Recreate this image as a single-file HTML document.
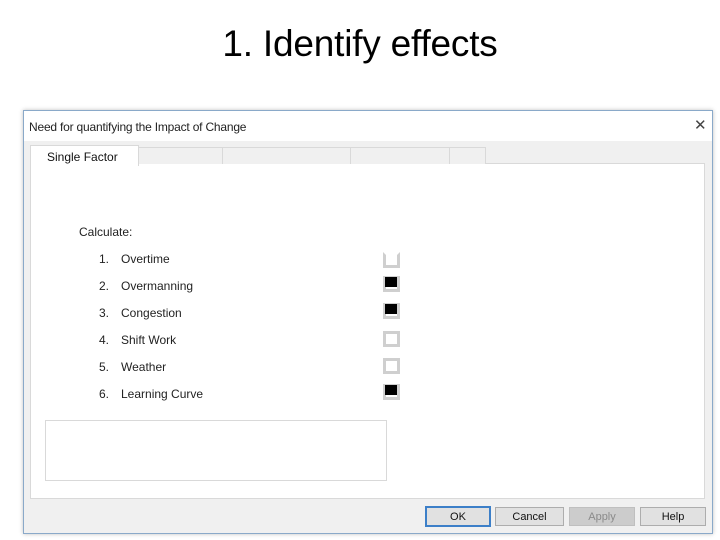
<!DOCTYPE html>
<html><head><style>
body{margin:0;width:720px;height:540px;background:#fff;position:relative;overflow:hidden;font-family:"Liberation Sans",sans-serif;}
.a{position:absolute;}
.h1{left:0;width:720px;top:23px;text-align:center;font-size:37px;color:#000;letter-spacing:-0.2px;}
.dlg{left:23px;top:110px;width:688px;height:422px;background:#f0f0f0;border:1px solid #8aa9c9;box-shadow:0 0 4px rgba(0,0,0,.25);}
.tb{left:0;top:0;width:688px;height:30px;background:#fff;}
.tt{left:5px;top:9px;font-size:12px;color:#222;letter-spacing:-0.2px;}
.x{left:670px;top:5px;font-size:15px;color:#444;font-weight:300;}
.panel{left:6px;top:52px;width:673px;height:334px;background:#fff;border:1px solid #d9d9d9;}
.tab{top:36px;height:16px;background:#f0f0f0;border:1px solid #d9d9d9;border-bottom:none;}
.tab0{left:6px;top:34px;width:107px;height:20px;background:#fff;border:1px solid #d9d9d9;border-bottom:none;font-size:12px;color:#111;}
.lab{font-size:12px;color:#222;}
.cb{width:11px;height:10px;border:3px solid #cfcfcf;background:#fff;}
.cb i{position:absolute;left:-1px;top:-2px;width:12px;height:10px;background:#000;}
.btn{top:396px;height:17px;border:1px solid #adadad;background:#e1e1e1;font-size:11px;text-align:center;line-height:19px;color:#111;}
</style></head><body>
<div class="a h1">1. Identify effects</div>
<div class="a dlg">
 <div class="a tb"><div class="a tt">Need for quantifying the Impact of Change</div><div class="a x">✕</div></div>
 <div class="a panel"></div>
 <div class="a tab" style="left:114px;width:84px"></div>
 <div class="a tab" style="left:198px;width:128px"></div>
 <div class="a tab" style="left:326px;width:99px"></div>
 <div class="a tab" style="left:425px;width:35px"></div>
 <div class="a tab0"><span class="a" style="left:16px;top:4px">Single Factor</span></div>
 <div class="a lab" style="left:55px;top:114px">Calculate:</div>
 <div class="a lab" style="left:75px;top:141px">1.</div><div class="a lab" style="left:97px;top:141px">Overtime</div>
 <div class="a lab" style="left:75px;top:168px">2.</div><div class="a lab" style="left:97px;top:168px">Overmanning</div>
 <div class="a lab" style="left:75px;top:195px">3.</div><div class="a lab" style="left:97px;top:195px">Congestion</div>
 <div class="a lab" style="left:75px;top:222px">4.</div><div class="a lab" style="left:97px;top:222px">Shift Work</div>
 <div class="a lab" style="left:75px;top:249px">5.</div><div class="a lab" style="left:97px;top:249px">Weather</div>
 <div class="a lab" style="left:75px;top:276px">6.</div><div class="a lab" style="left:97px;top:276px">Learning Curve</div>
 <div class="a cb" style="left:359px;top:141px;border-top-color:#fff"></div>
 <div class="a cb" style="left:359px;top:165px"><i></i></div>
 <div class="a cb" style="left:359px;top:192px"><i></i></div>
 <div class="a cb" style="left:359px;top:220px"></div>
 <div class="a cb" style="left:359px;top:247px"></div>
 <div class="a cb" style="left:359px;top:273px"><i></i></div>
 <div class="a" style="left:21px;top:309px;width:340px;height:59px;border:1px solid #d9d9d9;background:#fff"></div>
 <div class="a btn" style="left:401px;width:62px;border:2px solid #3c7fc8;top:395px">OK</div>
 <div class="a btn" style="left:471px;width:67px">Cancel</div>
 <div class="a btn" style="left:545px;width:64px;background:#cccccc;border-color:#bfbfbf;color:#8a8a8a">Apply</div>
 <div class="a btn" style="left:616px;width:64px">Help</div>
</div>
</body></html>
